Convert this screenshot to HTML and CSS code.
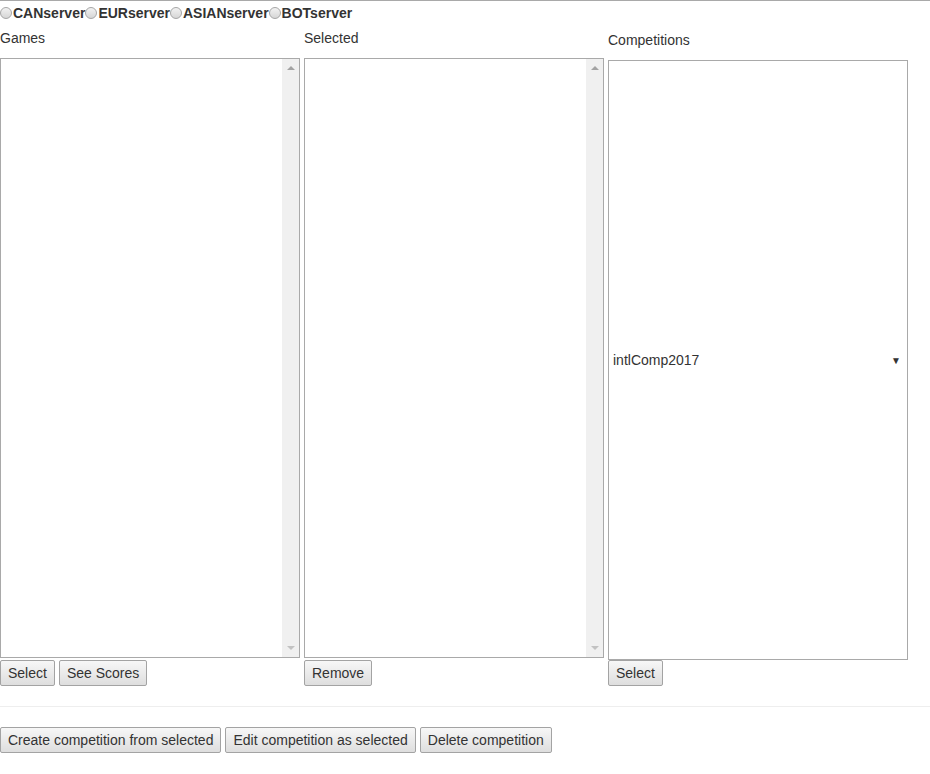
FILE: index.html
```html
<!DOCTYPE html>
<html>
<head>
<meta charset="utf-8">
<link rel="stylesheet" href="styles.css">
</head>
<body>
<div class="topline"></div>
<div class="servers">
  <label class="srv"><span class="radio"></span>CANserver</label>
  <label class="srv"><span class="radio"></span>EURserver</label>
  <label class="srv"><span class="radio"></span>ASIANserver</label>
  <label class="srv"><span class="radio"></span>BOTserver</label>
</div>
<div class="columns">
  <div class="col">
    <div class="label">Games</div>
    <div class="listbox">
      <div class="list-content"></div>
      <div class="scrollbar"><span class="arrow up"></span><span class="arrow down"></span></div>
    </div>
    <div class="btnrow">
      <button class="btn">Select</button>
      <button class="btn">See Scores</button>
    </div>
  </div>
  <div class="col">
    <div class="label">Selected</div>
    <div class="listbox">
      <div class="list-content"></div>
      <div class="scrollbar"><span class="arrow up"></span><span class="arrow down"></span></div>
    </div>
    <div class="btnrow">
      <button class="btn">Remove</button>
    </div>
  </div>
  <div class="col col-comp">
    <div class="label">Competitions</div>
    <div class="selectbox">
      <span class="sel-text">intlComp2017</span>
      <span class="sel-arrow">▼</span>
    </div>
    <div class="btnrow tight">
      <button class="btn">Select</button>
    </div>
  </div>
</div>
<div class="sep"></div>
<div class="actions">
  <button class="btn">Create competition from selected</button>
  <button class="btn">Edit competition as selected</button>
  <button class="btn">Delete competition</button>
</div>
</body>
</html>
```
FILE: styles.css
```css
html, body {
  margin: 0;
  padding: 0;
  background: #fff;
}
body {
  font-family: "Liberation Sans", Arial, sans-serif;
  font-size: 14px;
  color: #333;
  width: 930px;
}
.topline {
  height: 1px;
  background: #a9a9a9;
}
.servers {
  display: flex;
  align-items: center;
  height: 24px;
}
.srv {
  display: flex;
  align-items: center;
  font-weight: bold;
  line-height: 24px;
}
.radio {
  width: 10px;
  height: 10px;
  border: 1px solid #a6a6a6;
  border-radius: 50%;
  background: linear-gradient(#f2f2f2, #d6d6d6);
  margin-right: 1px;
  box-sizing: content-box;
}
.columns {
  display: flex;
  gap: 4px;
  margin-top: 5px;
}
.col {
  width: 300px;
  display: flex;
  flex-direction: column;
}
.col-comp {
  margin-top: 2px;
}
.label {
  line-height: 16px;
  height: 16px;
  margin-bottom: 12px;
}
.listbox {
  height: 600px;
  border: 1px solid #a9a9a9;
  box-sizing: border-box;
  display: flex;
  background: #fff;
}
.list-content {
  flex: 1;
}
.scrollbar {
  width: 17px;
  background: #f0f0f0;
  display: flex;
  flex-direction: column;
  justify-content: space-between;
  align-items: center;
  padding: 7px 0 7px;
}
.arrow {
  width: 0;
  height: 0;
  border-left: 4px solid transparent;
  border-right: 4px solid transparent;
}
.arrow.up {
  border-bottom: 4px solid #a3a3a3;
}
.arrow.down {
  border-top: 4px solid #c2c2c2;
}
.selectbox {
  height: 600px;
  border: 1px solid #a9a9a9;
  box-sizing: border-box;
  display: flex;
  align-items: center;
  justify-content: space-between;
  padding: 0 6px 0 4px;
  background: #fff;
}
.sel-text {
  color: #333;
}
.sel-arrow {
  font-size: 10px;
  color: #333;
}
.btnrow {
  display: flex;
  gap: 4px;
  margin-top: 2px;
}
.btnrow.tight {
  margin-top: 0;
}
.btn {
  font-family: "Liberation Sans", Arial, sans-serif;
  font-size: 14px;
  color: #333;
  line-height: 16px;
  height: 26px;
  padding: 4px 7px;
  border: 1px solid #a3a3a3;
  border-radius: 2px;
  background: linear-gradient(#f7f7f7, #dedede);
  margin: 0;
  cursor: pointer;
}
.sep {
  height: 1px;
  background: #eee;
  margin-top: 20px;
}
.actions {
  display: flex;
  gap: 4px;
  margin-top: 20px;
}
```
